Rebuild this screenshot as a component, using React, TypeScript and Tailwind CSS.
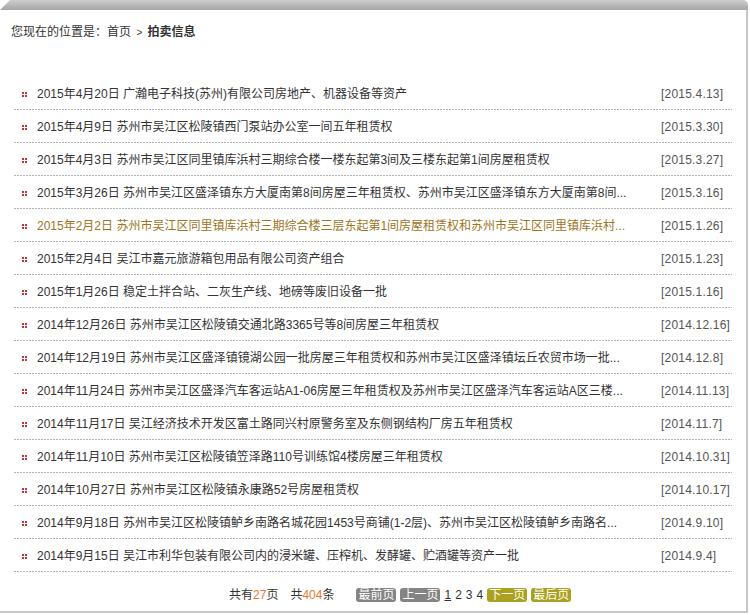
import React from "react";

const items: { title: string; date: string; hot?: boolean }[] = [
  { title: "2015年4月20日 广瀚电子科技(苏州)有限公司房地产、机器设备等资产", date: "[2015.4.13]" },
  { title: "2015年4月9日 苏州市吴江区松陵镇西门泵站办公室一间五年租赁权", date: "[2015.3.30]" },
  { title: "2015年4月3日 苏州市吴江区同里镇库浜村三期综合楼一楼东起第3间及三楼东起第1间房屋租赁权", date: "[2015.3.27]" },
  { title: "2015年3月26日 苏州市吴江区盛泽镇东方大厦南第8间房屋三年租赁权、苏州市吴江区盛泽镇东方大厦南第8间...", date: "[2015.3.16]" },
  { title: "2015年2月2日 苏州市吴江区同里镇库浜村三期综合楼三层东起第1间房屋租赁权和苏州市吴江区同里镇库浜村...", date: "[2015.1.26]", hot: true },
  { title: "2015年2月4日 吴江市嘉元旅游箱包用品有限公司资产组合", date: "[2015.1.23]" },
  { title: "2015年1月26日 稳定土拌合站、二灰生产线、地磅等废旧设备一批", date: "[2015.1.16]" },
  { title: "2014年12月26日 苏州市吴江区松陵镇交通北路3365号等8间房屋三年租赁权", date: "[2014.12.16]" },
  { title: "2014年12月19日 苏州市吴江区盛泽镇镜湖公园一批房屋三年租赁权和苏州市吴江区盛泽镇坛丘农贸市场一批...", date: "[2014.12.8]" },
  { title: "2014年11月24日 苏州市吴江区盛泽汽车客运站A1-06房屋三年租赁权及苏州市吴江区盛泽汽车客运站A区三楼...", date: "[2014.11.13]" },
  { title: "2014年11月17日 吴江经济技术开发区富土路同兴村原警务室及东侧钢结构厂房五年租赁权", date: "[2014.11.7]" },
  { title: "2014年11月10日 苏州市吴江区松陵镇笠泽路110号训练馆4楼房屋三年租赁权", date: "[2014.10.31]" },
  { title: "2014年10月27日 苏州市吴江区松陵镇永康路52号房屋租赁权", date: "[2014.10.17]" },
  { title: "2014年9月18日 苏州市吴江区松陵镇鲈乡南路名城花园1453号商铺(1-2层)、苏州市吴江区松陵镇鲈乡南路名...", date: "[2014.9.10]" },
  { title: "2014年9月15日 吴江市利华包装有限公司内的浸米罐、压榨机、发酵罐、贮酒罐等资产一批", date: "[2014.9.4]" },
];

function Bullet() {
  return (
    <span className="grid grid-cols-2 gap-[1px] w-[5px] h-[5px] shrink-0">
      <i className="block w-[2px] h-[2px] bg-[#c4313f]" />
      <i className="block w-[2px] h-[2px] bg-[#c4313f]" />
      <i className="block w-[2px] h-[2px] bg-[#c4313f]" />
      <i className="block w-[2px] h-[2px] bg-[#c4313f]" />
    </span>
  );
}

export default function App() {
  return (
    <div className="w-[750px] h-[615px] bg-white font-['Liberation_Sans','Noto_Sans_CJK_SC',sans-serif] text-[12px] text-[#333]">
      <div className="w-[748px] h-[10px] rounded-tr-[5px] bg-gradient-to-b from-[#cdcdcd] to-[#a6a6a6] [clip-path:polygon(10px_0,100%_0,100%_100%,0_100%)]" />
      <div className="w-[748px] h-[603px] border-r-2 border-b-2 border-[#c6c6c6] flex flex-col">
        <div className="h-[67px] pl-[11px] pt-[11px] leading-[20px]">
          您现在的位置是<span className="font-['Noto_Sans_CJK_SC',sans-serif]">：</span>首页 <span className="text-[10px] mx-[2px]">&gt;</span> <b className="font-bold">拍卖信息</b>
        </div>

        <ul className="ml-[14px] w-[718px]">
          {items.map((it) => (
            <li
              key={it.title}
              className="h-[33px] flex items-center pl-[8px] pt-[1px] bg-[linear-gradient(to_right,#666_1px,transparent_1px)] bg-[length:3px_1px] bg-repeat-x bg-bottom"
            >
              <Bullet />
              <span className={`ml-[10px] flex-1 truncate ${it.hot ? "text-[#9c741c]" : ""}`}>{it.title}</span>
              <span className="w-[71px] shrink-0 text-[#555] tracking-[0.2px]">{it.date}</span>
            </li>
          ))}
        </ul>

        <div className="flex-1 flex items-center pl-[229px] pt-[6px] leading-[16px]">
          <span>
            共有<span className="text-[#e8772a]">27</span>页
          </span>
          <span className="ml-[12px]">
            共<span className="text-[#e8772a]">404</span>条
          </span>
          <div className="ml-[22px] flex items-center gap-[4px]">
            <span className="bg-[#848484] text-white rounded-[3px] px-[2px] leading-[14px]">最前页</span>
            <span className="bg-[#848484] text-white rounded-[3px] px-[2px] leading-[14px]">上一页</span>
            <span className="underline">1</span>
            <span>2</span>
            <span>3</span>
            <span>4</span>
            <span className="bg-[#a9a11f] text-white rounded-[3px] px-[2px] leading-[14px]">下一页</span>
            <span className="bg-[#a9a11f] text-white rounded-[3px] px-[2px] leading-[14px]">最后页</span>
          </div>
        </div>
      </div>
    </div>
  );
}
